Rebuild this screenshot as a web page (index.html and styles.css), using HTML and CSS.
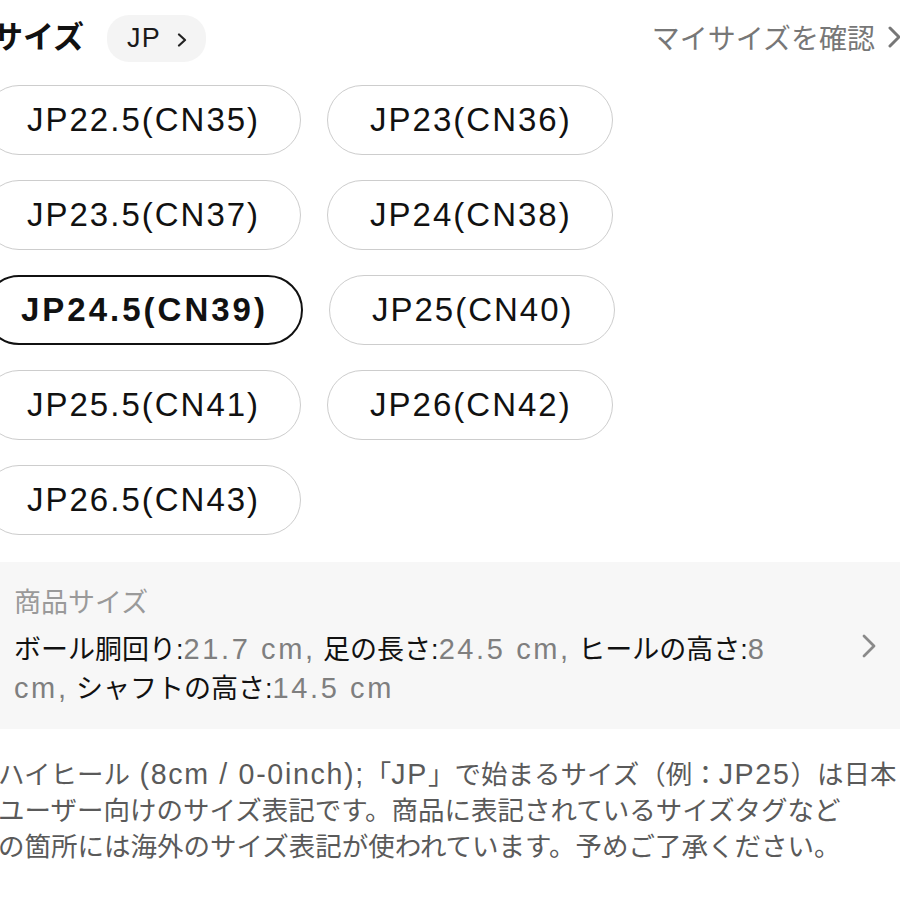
FILE: index.html
```html
<!DOCTYPE html>
<html lang="ja">
<head>
<meta charset="utf-8">
<link rel="stylesheet" href="styles.css">
</head>
<body>
<div class="page">
  <div class="header">
    <div class="header-left">
      <span class="title">サイズ</span>
      <span class="region-pill"><span class="pill-text">JP</span>
        <svg class="pill-chev" width="12" height="14" viewBox="0 0 12 14"><polyline points="3,1.5 9,7 3,12.5" fill="none" stroke="#222" stroke-width="2.2" stroke-linecap="round" stroke-linejoin="round"/></svg>
      </span>
    </div>
    <div class="my-size">マイサイズを確認
      <svg class="link-chev" width="16" height="22" viewBox="0 0 16 22"><polyline points="3,2 12,11 3,20" fill="none" stroke="#777" stroke-width="3" stroke-linecap="round" stroke-linejoin="round"/></svg>
    </div>
  </div>

  <div class="sizes">
    <div class="size-btn">JP22.5(CN35)</div>
    <div class="size-btn">JP23(CN36)</div>
    <div class="size-btn">JP23.5(CN37)</div>
    <div class="size-btn">JP24(CN38)</div>
    <div class="size-btn selected">JP24.5(CN39)</div>
    <div class="size-btn">JP25(CN40)</div>
    <div class="size-btn">JP25.5(CN41)</div>
    <div class="size-btn">JP26(CN42)</div>
    <div class="size-btn">JP26.5(CN43)</div>
  </div>

  <div class="product-size">
    <div class="ps-body">
      <div class="ps-title">商品サイズ</div>
      <div class="ps-line">ボール胴回り:<span class="val">21.7 cm,</span> 足の長さ:<span class="val">24.5 cm,</span> ヒールの高さ:<span class="val">8</span></div>
      <div class="ps-line"><span class="val">cm,</span> シャフトの高さ:<span class="val">14.5 cm</span></div>
    </div>
    <svg class="ps-chev" width="16" height="24" viewBox="0 0 16 24"><polyline points="3,2 13,12 3,22" fill="none" stroke="#8a8a8a" stroke-width="2.8" stroke-linecap="round" stroke-linejoin="round"/></svg>
  </div>

  <div class="note">
    <div class="note-line">ハイヒール<span class="lat"> (8cm / 0-0inch);</span>「<span class="lat">JP</span>」で始まるサイズ（例：<span class="lat">JP25</span>）は日本</div>
    <div class="note-line">ユーザー向けのサイズ表記です。商品に表記されているサイズタグなど</div>
    <div class="note-line">の箇所には海外のサイズ表記が使われています。予めご了承ください。</div>
  </div>
</div>
</body>
</html>
```

FILE: styles.css
```css
html, body {
  margin: 0;
  padding: 0;
  background: #ffffff;
  overflow: hidden;
}

body {
  font-family: "Liberation Sans", "Noto Sans CJK JP", sans-serif;
  color: #111111;
}

.page {
  margin-left: -3px;
  width: 906px;
}

.header {
  display: flex;
  align-items: center;
  justify-content: space-between;
  padding-top: 15px;
  height: 47px;
}

.header-left {
  display: flex;
  align-items: center;
}

.title {
  font-size: 31px;
  font-weight: 700;
  line-height: 47px;
  margin-left: -5px;
  margin-top: -2px;
}

.region-pill {
  display: flex;
  align-items: center;
  height: 47px;
  box-sizing: border-box;
  margin-left: 23px;
  padding: 0 18px 0 20px;
  background: #f4f4f4;
  border-radius: 22px;
}

.pill-text {
  font-size: 27px;
  letter-spacing: 0.04em;
  color: #1a1a1a;
}

.pill-chev {
  margin-left: 15px;
  margin-top: 2px;
}

.my-size {
  display: flex;
  align-items: center;
  font-size: 28px;
  color: #777777;
  margin-top: -4px;
}

.link-chev {
  margin-left: 12px;
}

.sizes {
  display: flex;
  flex-wrap: wrap;
  gap: 25px 26px;
  margin-top: 23px;
  margin-left: -13px;
}

.size-btn {
  height: 70px;
  box-sizing: border-box;
  display: flex;
  align-items: center;
  padding: 0 40px 0 42px;
  border: 1px solid #cdcdcd;
  border-radius: 35px;
  font-size: 33px;
  letter-spacing: 2px;
  color: #111111;
  background: #ffffff;
}

.size-btn.selected {
  border: 2px solid #111111;
  font-weight: 700;
  letter-spacing: 3px;
  padding: 0 33px 0 35px;
}

.product-size {
  display: flex;
  align-items: center;
  margin-top: 27px;
  margin-left: 3px;
  background: #f7f7f7;
  padding: 22px 26px 21px 14px;
}

.ps-body {
  flex: 1;
  font-size: 27px;
  line-height: 38px;
}

.ps-title {
  color: #9a9a9a;
  margin-bottom: 8px;
}

.ps-line {
  white-space: nowrap;
  color: #111111;
}

.val {
  color: #7f7f7f;
  font-size: 29px;
  letter-spacing: 0.09em;
}

.ps-chev {
  flex: none;
}

.note {
  margin-top: 27px;
  margin-left: 1px;
  font-size: 26.5px;
  line-height: 36px;
  color: #5a5a5a;
}

.note-line {
  white-space: nowrap;
}

.lat {
  font-size: 28.6px;
  letter-spacing: 0.058em;
}
```
